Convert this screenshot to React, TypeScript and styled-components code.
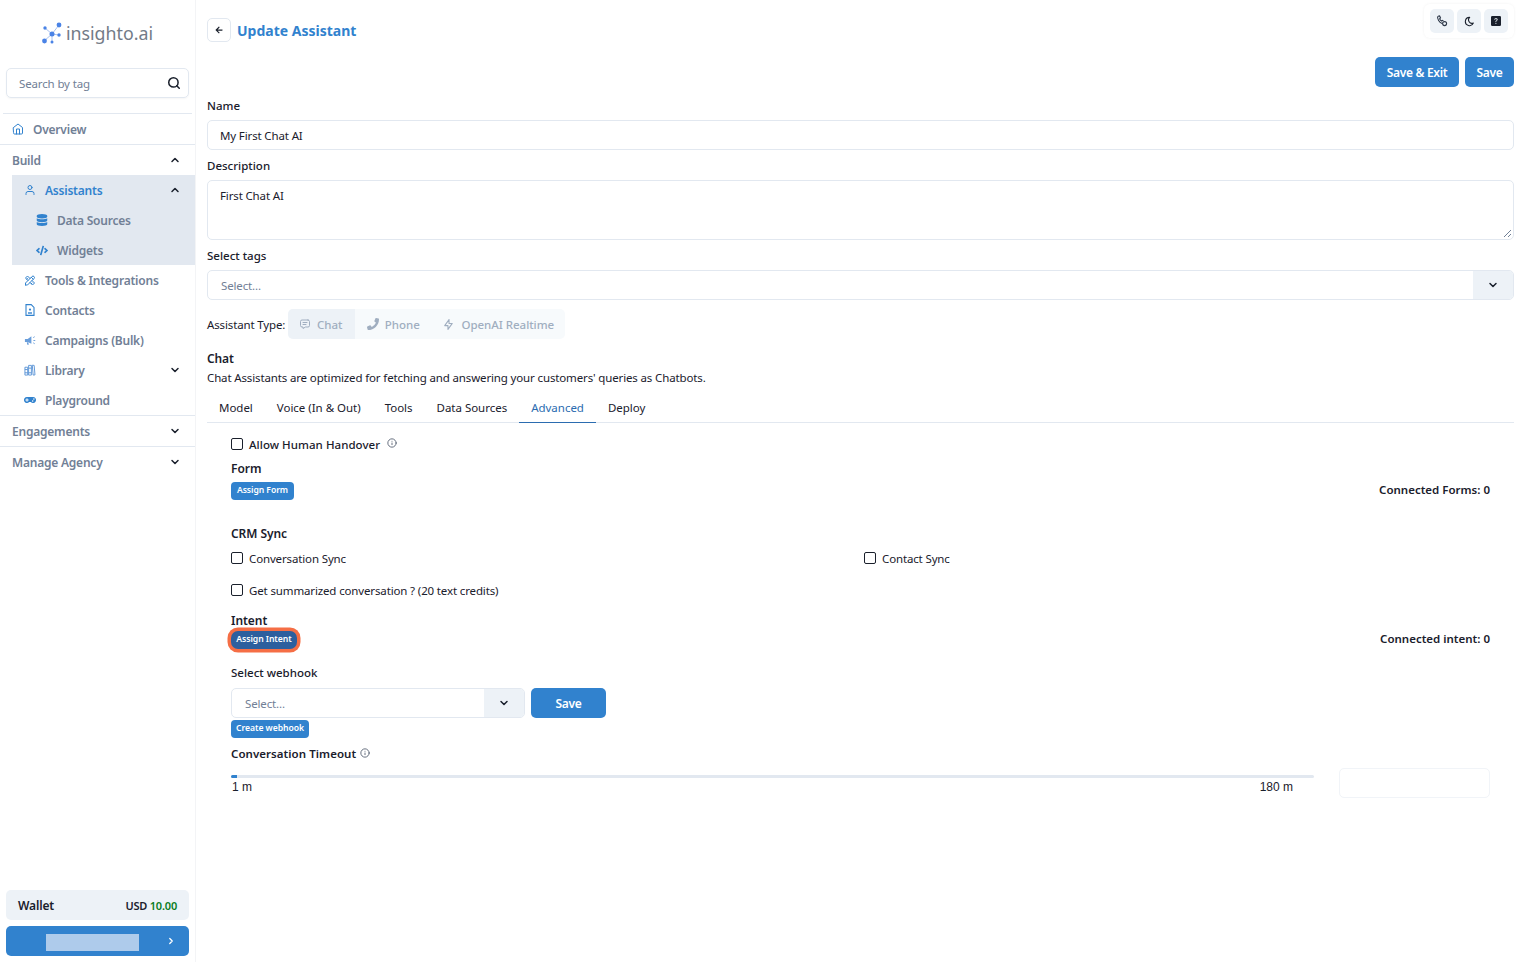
import React from "react";
import styled, { createGlobalStyle } from "styled-components";
import { FiSearch, FiChevronDown, FiChevronUp, FiChevronRight, FiHome, FiUser, FiInfo } from "react-icons/fi";
import { FaDatabase, FaCode, FaGamepad, FaPhoneAlt, FaArrowLeft } from "react-icons/fa";
import { TbTools, TbBolt, TbMessage, TbMoon } from "react-icons/tb";
import { BsFillQuestionSquareFill } from "react-icons/bs";

const Global = createGlobalStyle`
  html, body { margin: 0; padding: 0; background: #fff; }
  body { font-family: "Noto Sans", "Open Sans", sans-serif; font-size: 11.5px; letter-spacing: -0.14px; color: #1a202c; }
  * { box-sizing: border-box; }
`;

const Page = styled.div`
  display: flex;
  width: 1526px;
  height: 962px;
  overflow: hidden;
`;

const Sidebar = styled.aside`
  width: 196px;
  height: 962px;
  flex: none;
  display: flex;
  flex-direction: column;
  border-right: 1px solid #f3f4f6;
`;

const LogoRow = styled.div`
  height: 68px;
  display: flex;
  align-items: center;
  justify-content: center;
  gap: 4px;
  color: #737b87;
  font-size: 17.8px;
  letter-spacing: 0;
  padding: 0 0 2px 0;
`;

const SearchBox = styled.div`
  margin: 0 6px;
  height: 30px;
  border: 1px solid #e2e8f0;
  border-radius: 5px;
  display: flex;
  align-items: center;
  justify-content: space-between;
  padding: 0 7px 0 12px;
  color: #718096;
  box-shadow: 0 1px 2px rgba(0, 0, 0, 0.04);
  svg { color: #1a202c; stroke-width: 2.6; }
`;

const Divider = styled.div<{ $top?: number; $inset?: number }>`
  height: 1px;
  background: #e2e8f0;
  margin: ${(p) => p.$top ?? 0}px ${(p) => p.$inset ?? 0}px 0;
`;

const NavRow = styled.div<{ $indent: number; $active?: boolean }>`
  height: 30px;
  display: flex;
  align-items: center;
  padding-left: ${(p) => p.$indent}px;
  padding-right: 14px;
  font-weight: 600;
  font-size: 12px;
  letter-spacing: -0.22px;
  color: ${(p) => (p.$active ? "#3182ce" : "#718096")};
`;

const NavIcon = styled.span`
  width: 12px;
  margin-right: 9px;
  display: inline-flex;
  justify-content: center;
  color: #3182ce;
`;

const NavLabel = styled.span`
  flex: 1;
`;

const Chevron = styled.span`
  display: inline-flex;
  color: #1a202c;
  svg { stroke-width: 3; }
`;

const SubGroup = styled.div`
  margin-left: 12px;
  background: #e2e8f0;
`;

const Spacer = styled.div`
  flex: 1;
`;

const WalletCard = styled.div`
  margin: 0 6px;
  height: 30px;
  background: #edf2f7;
  border-radius: 5px;
  display: flex;
  align-items: center;
  justify-content: space-between;
  padding: 0 12px;
  font-weight: 600;
`;

const WalletName = styled.span`
  font-size: 12px;
`;

const WalletAmount = styled.span`
  font-size: 11px;
  letter-spacing: -0.2px;
  b { color: #0a7d1e; font-weight: 600; }
`;

const AccountButton = styled.div`
  margin: 6px;
  height: 30px;
  background: #3182ce;
  border-radius: 5px;
  display: flex;
  align-items: center;
  color: #fff;
  padding: 0 13px 0 40px;
  justify-content: space-between;
`;

const Redacted = styled.div`
  width: 93px;
  height: 17px;
  margin-top: 2px;
  background: #aecbeb;
`;

const Main = styled.main`
  flex: 1;
  min-width: 0;
  padding: 0 12px 0 11px;
`;

const TitleRow = styled.div`
  height: 57px;
  display: flex;
  align-items: flex-start;
  padding-top: 18px;
  gap: 6px;
`;

const BackButton = styled.div`
  width: 24px;
  height: 24px;
  border: 1px solid #e2e8f0;
  border-radius: 5px;
  display: flex;
  align-items: center;
  justify-content: center;
`;

const Title = styled.h1`
  margin: 0;
  font-size: 14px;
  line-height: 25px;
  letter-spacing: 0;
  font-weight: 700;
  color: #3182ce;
`;

const UtilityCard = styled.div`
  margin: -14px 0 0 auto;
  padding: 5px 6px;
  display: flex;
  gap: 3px;
  border-radius: 6px;
  box-shadow: 0 0 3px rgba(0, 0, 0, 0.06);
`;

const UtilityButton = styled.div`
  width: 24px;
  height: 24px;
  background: #edf2f7;
  border-radius: 5px;
  display: flex;
  align-items: center;
  justify-content: center;
`;

const ActionRow = styled.div`
  display: flex;
  justify-content: flex-end;
  gap: 6px;
`;

const SolidButton = styled.button<{ $w: number }>`
  width: ${(p) => p.$w}px;
  height: 30px;
  border: none;
  border-radius: 5px;
  background: #3182ce;
  color: #fff;
  font: 600 12px "Noto Sans", sans-serif;
  letter-spacing: -0.3px;
  padding: 0;
`;

const FieldLabel = styled.div<{ $top?: number; $gap?: number }>`
  height: 18px;
  line-height: 20px;
  font-weight: 500;
  letter-spacing: 0;
  margin: ${(p) => p.$top ?? 0}px 0 ${(p) => p.$gap ?? 6}px;
`;

const TextBox = styled.div<{ $h?: number }>`
  height: ${(p) => p.$h ?? 30}px;
  border: 1px solid #e2e8f0;
  border-radius: 5px;
  padding: 0 12px;
  line-height: 29px;
  position: relative;
`;

const Grip = styled.svg`
  position: absolute;
  right: 1px;
  bottom: 1px;
`;

const SelectBox = styled.div<{ $w?: number }>`
  height: 30px;
  ${(p) => (p.$w ? `width: ${p.$w}px;` : "")}
  border: 1px solid #e2e8f0;
  border-radius: 5px;
  display: flex;
  overflow: hidden;
  color: #718096;
`;

const SelectValue = styled.div`
  flex: 1;
  padding-left: 13px;
  line-height: 29px;
`;

const SelectAddon = styled.div`
  width: 40px;
  background: #edf2f7;
  display: flex;
  align-items: center;
  justify-content: center;
  color: #1a202c;
  svg { stroke-width: 3; }
`;

const TypeRow = styled.div`
  height: 30px;
  margin-top: 9px;
  display: flex;
  align-items: center;
  gap: 3px;
`;

const TypeGroup = styled.div`
  display: flex;
  height: 30px;
  background: #f7fafc;
  border-radius: 5px;
  overflow: hidden;
`;

const TypeTab = styled.div<{ $on?: boolean; $w: number }>`
  width: ${(p) => p.$w}px;
  display: flex;
  align-items: center;
  justify-content: center;
  gap: 6px;
  color: #a0aec0;
  font-weight: 500;
  letter-spacing: -0.03px;
  padding-right: 2px;
  background: ${(p) => (p.$on ? "#edf2f7" : "transparent")};
`;

const Mirrored = styled.span`
  display: inline-flex;
  transform: scaleX(-1);
`;

const SectionName = styled.div`
  margin-top: 11px;
  line-height: 18px;
  font-size: 12px;
  font-weight: 600;
`;

const SectionText = styled.div`
  line-height: 20px;
`;

const Tabs = styled.div`
  display: flex;
  height: 30px;
  margin-top: 5px;
  border-bottom: 1px solid #e2e8f0;
`;

const Tab = styled.div<{ $on?: boolean }>`
  padding: 0 12px;
  line-height: 29px;
  height: 30px;
  letter-spacing: -0.02px;
  color: ${(p) => (p.$on ? "#2b6cb0" : "#1a202c")};
  border-bottom: 1px solid ${(p) => (p.$on ? "#2b6cb0" : "transparent")};
`;

const Panel = styled.div`
  padding: 11px 24px 0;
`;

const CheckLine = styled.label<{ $top?: number; $grow?: boolean; $medium?: boolean }>`
  display: flex;
  align-items: center;
  height: 20px;
  gap: 6px;
  margin-top: ${(p) => p.$top ?? 0}px;
  ${(p) => (p.$grow ? "flex: 0 0 633px;" : "")}
  ${(p) => (p.$medium ? "font-weight: 500; letter-spacing: 0.05px;" : "")}
`;

const Box = styled.span`
  width: 12px;
  height: 12px;
  border: 1px solid #1a202c;
  border-radius: 2px;
  flex: none;
`;

const InfoMark = styled.span`
  display: inline-flex;
  color: #4a5568;
  margin: -3px 0 0 1px;
`;

const Heading = styled.div<{ $top?: number }>`
  font-weight: 600;
  font-size: 12px;
  letter-spacing: -0.05px;
  line-height: 18px;
  margin-top: ${(p) => p.$top ?? 0}px;
`;

const TimeoutHeading = styled(Heading)`
  font-size: 11.5px;
  letter-spacing: 0.05px;
`;

const SpreadRow = styled.div<{ $top?: number }>`
  display: flex;
  justify-content: space-between;
  align-items: center;
  margin-top: ${(p) => p.$top ?? 0}px;
`;

const SyncRow = styled.div`
  display: flex;
  margin-top: 5px;
`;

const Connected = styled.div`
  font-weight: 600;
  letter-spacing: 0;
  line-height: 14px;
  padding-bottom: 3px;
`;

const Pill = styled.span<{ $ring?: boolean; $w: number }>`
  display: inline-block;
  width: ${(p) => p.$w}px;
  height: 18px;
  line-height: 17px;
  text-align: center;
  border-radius: 4px;
  font-size: 8.6px;
  letter-spacing: -0.05px;
  font-weight: 600;
  color: #fff;
  background: ${(p) => (p.$ring ? "#2c5f9e" : "#3182ce")};
  ${(p) => (p.$ring ? "box-shadow: 0 0 0 3.5px #f56e45; border-radius: 7px;" : "")}
`;

const BlockPill = styled(Pill)`
  display: block;
  margin-top: 2px;
`;

const WebhookRow = styled.div`
  display: flex;
  gap: 6px;
`;

const SliderRow = styled.div`
  display: flex;
  margin-top: 5px;
  gap: 25px;
  align-items: flex-start;
`;

const SliderCol = styled.div`
  flex: 1;
  padding-top: 7px;
`;

const Track = styled.div`
  height: 3px;
  background: #e2e8f0;
  border-radius: 2px;
  overflow: hidden;
`;

const TrackFill = styled.div`
  height: 3px;
  background: #3182ce;
`;

const SliderScale = styled.div`
  display: flex;
  justify-content: space-between;
  padding: 0 21px 0 1px;
  line-height: 18px;
  font-family: "Liberation Sans", sans-serif;
  font-size: 12px;
  letter-spacing: 0;
`;

const GhostInput = styled.div`
  width: 151px;
  height: 30px;
  border: 1px solid #f1f4f8;
  border-radius: 5px;
`;

const LogoMark = () => (
  <svg width="20" height="22" viewBox="0 0 20 22" fill="#4a83e6" aria-hidden>
    <g stroke="#a9c2f0" strokeWidth="1">
      <path d="M3 6l7 6M17 3l-7 9M2 19l8-7M10 12l7 1M10 12l0 7" />
    </g>
    <circle cx="3" cy="6" r="1.7" />
    <circle cx="17" cy="3" r="2.4" />
    <circle cx="10" cy="12" r="2.5" />
    <circle cx="2.5" cy="19" r="2.4" />
    <circle cx="17" cy="13" r="1.7" />
    <circle cx="10" cy="20" r="1.5" />
  </svg>
);

const ContactsIcon = () => (
  <svg width="10" height="12" viewBox="0 0 10 12" fill="none" stroke="#3182ce" strokeWidth="1.1" aria-hidden>
    <path d="M1 .6h5.2L9 3.4v8H1z" />
    <circle cx="5" cy="5.6" r="1.1" fill="#3182ce" stroke="none" />
    <path d="M3 9h4" strokeWidth="1.4" />
  </svg>
);

const CampaignIcon = () => (
  <svg width="13" height="11" viewBox="0 0 13 11" fill="#6a9edb" aria-hidden>
    <path d="M1 4h3l4-3v8L4 7H1z" />
    <path d="M3 7.5h1.6l.6 2.5H3.6z" />
    <path d="M10 2.4l1.6-1M10.2 5.5h2M10 8l1.6 1" stroke="#6a9edb" strokeWidth="1" fill="none" />
  </svg>
);

const LibraryIcon = () => (
  <svg width="13" height="12" viewBox="0 0 13 12" fill="none" stroke="#5a94d6" strokeWidth="1" aria-hidden>
    <path d="M1 3h3v8.5H1zM5 1h3v10.5H5zM9 .8l2 .2.9 10.3-2 .2z" />
    <path d="M1 5.5h3M5 4h3M1 9h3M5 9h3" />
  </svg>
);

const PhoneGearIcon = () => (
  <svg width="12" height="12" viewBox="0 0 12 12" fill="none" stroke="#2d3748" strokeWidth="1.1" aria-hidden>
    <path d="M2 1.2l1.6-.3.9 2-.9.9c.4 1 1 1.7 2 2.2l.9-.7 1 .6" />
    <path d="M1.6 1.4c-.4 2.6 1.6 6 4.4 7" />
    <circle cx="8.6" cy="8.6" r="2" />
  </svg>
);

const Info = () => (
  <InfoMark>
    <FiInfo size={10} />
  </InfoMark>
);

export default function App() {
  return (
    <>
      <Global />
      <Page>
        <Sidebar>
          <LogoRow>
            <LogoMark />
            <span>insighto.ai</span>
          </LogoRow>
          <SearchBox>
            Search by tag
            <FiSearch size={14} />
          </SearchBox>
          <Divider $top={15} $inset={3} />
          <NavRow $indent={12}>
            <NavIcon>
              <FiHome size={12} />
            </NavIcon>
            <NavLabel>Overview</NavLabel>
          </NavRow>
          <Divider />
          <NavRow $indent={12}>
            <NavLabel>Build</NavLabel>
            <Chevron>
              <FiChevronUp size={12} />
            </Chevron>
          </NavRow>
          <SubGroup>
            <NavRow $indent={12} $active>
              <NavIcon>
                <FiUser size={12} />
              </NavIcon>
              <NavLabel>Assistants</NavLabel>
              <Chevron>
                <FiChevronUp size={12} />
              </Chevron>
            </NavRow>
            <NavRow $indent={24}>
              <NavIcon>
                <FaDatabase size={12} />
              </NavIcon>
              <NavLabel>Data Sources</NavLabel>
            </NavRow>
            <NavRow $indent={24}>
              <NavIcon>
                <FaCode size={13} />
              </NavIcon>
              <NavLabel>Widgets</NavLabel>
            </NavRow>
          </SubGroup>
          <NavRow $indent={24}>
            <NavIcon>
              <TbTools size={13} />
            </NavIcon>
            <NavLabel>Tools &amp; Integrations</NavLabel>
          </NavRow>
          <NavRow $indent={24}>
            <NavIcon>
              <ContactsIcon />
            </NavIcon>
            <NavLabel>Contacts</NavLabel>
          </NavRow>
          <NavRow $indent={24}>
            <NavIcon>
              <CampaignIcon />
            </NavIcon>
            <NavLabel>Campaigns (Bulk)</NavLabel>
          </NavRow>
          <NavRow $indent={24}>
            <NavIcon>
              <LibraryIcon />
            </NavIcon>
            <NavLabel>Library</NavLabel>
            <Chevron>
              <FiChevronDown size={12} />
            </Chevron>
          </NavRow>
          <NavRow $indent={24}>
            <NavIcon>
              <FaGamepad size={14} />
            </NavIcon>
            <NavLabel>Playground</NavLabel>
          </NavRow>
          <Divider />
          <NavRow $indent={12}>
            <NavLabel>Engagements</NavLabel>
            <Chevron>
              <FiChevronDown size={12} />
            </Chevron>
          </NavRow>
          <Divider />
          <NavRow $indent={12}>
            <NavLabel>Manage Agency</NavLabel>
            <Chevron>
              <FiChevronDown size={12} />
            </Chevron>
          </NavRow>
          <Spacer />
          <WalletCard>
            <WalletName>Wallet</WalletName>
            <WalletAmount>
              USD <b>10.00</b>
            </WalletAmount>
          </WalletCard>
          <AccountButton>
            <Redacted />
            <FiChevronRight size={10} strokeWidth={3} />
          </AccountButton>
        </Sidebar>
        <Main>
          <TitleRow>
            <BackButton>
              <FaArrowLeft size={8} />
            </BackButton>
            <Title>Update Assistant</Title>
            <UtilityCard>
              <UtilityButton>
                <PhoneGearIcon />
              </UtilityButton>
              <UtilityButton>
                <TbMoon size={11} strokeWidth={2.4} />
              </UtilityButton>
              <UtilityButton>
                <BsFillQuestionSquareFill size={10} />
              </UtilityButton>
            </UtilityCard>
          </TitleRow>
          <ActionRow>
            <SolidButton $w={84}>Save &amp; Exit</SolidButton>
            <SolidButton $w={49}>Save</SolidButton>
          </ActionRow>
          <FieldLabel $top={9}>Name</FieldLabel>
          <TextBox>My First Chat AI</TextBox>
          <FieldLabel $top={6}>Description</FieldLabel>
          <TextBox $h={60}>
            First Chat AI
            <Grip width="9" height="9" viewBox="0 0 9 9">
              <path d="M1 8L8 1M5 8L8 5" stroke="#718096" strokeWidth="1" />
            </Grip>
          </TextBox>
          <FieldLabel $top={6}>Select tags</FieldLabel>
          <SelectBox>
            <SelectValue>Select...</SelectValue>
            <SelectAddon>
              <FiChevronDown size={12} />
            </SelectAddon>
          </SelectBox>
          <TypeRow>
            Assistant Type:
            <TypeGroup>
              <TypeTab $on $w={67}>
                <TbMessage size={12} />
                Chat
              </TypeTab>
              <TypeTab $w={78}>
                <Mirrored>
                  <FaPhoneAlt size={12} />
                </Mirrored>
                Phone
              </TypeTab>
              <TypeTab $w={132}>
                <TbBolt size={13} />
                OpenAI Realtime
              </TypeTab>
            </TypeGroup>
          </TypeRow>
          <SectionName>Chat</SectionName>
          <SectionText>Chat Assistants are optimized for fetching and answering your customers' queries as Chatbots.</SectionText>
          <Tabs>
            <Tab>Model</Tab>
            <Tab>Voice (In &amp; Out)</Tab>
            <Tab>Tools</Tab>
            <Tab>Data Sources</Tab>
            <Tab $on>Advanced</Tab>
            <Tab>Deploy</Tab>
          </Tabs>
          <Panel>
            <CheckLine $medium>
              <Box />
              Allow Human Handover
              <Info />
            </CheckLine>
            <Heading $top={6}>Form</Heading>
            <SpreadRow $top={4}>
              <Pill $w={63}>Assign Form</Pill>
              <Connected>Connected Forms: 0</Connected>
            </SpreadRow>
            <Heading $top={25}>CRM Sync</Heading>
            <SyncRow>
              <CheckLine $grow>
                <Box />
                Conversation Sync
              </CheckLine>
              <CheckLine>
                <Box />
                Contact Sync
              </CheckLine>
            </SyncRow>
            <CheckLine $top={12}>
              <Box />
              Get summarized conversation ? (20 text credits)
            </CheckLine>
            <Heading $top={12}>Intent</Heading>
            <SpreadRow $top={1}>
              <Pill $ring $w={66}>
                Assign Intent
              </Pill>
              <Connected>Connected intent: 0</Connected>
            </SpreadRow>
            <FieldLabel $top={14} $gap={7}>
              Select webhook
            </FieldLabel>
            <WebhookRow>
              <SelectBox $w={294}>
                <SelectValue>Select...</SelectValue>
                <SelectAddon>
                  <FiChevronDown size={12} />
                </SelectAddon>
              </SelectBox>
              <SolidButton $w={75}>Save</SolidButton>
            </WebhookRow>
            <BlockPill $w={78}>Create webhook</BlockPill>
            <TimeoutHeading $top={7}>
              Conversation Timeout <Info />
            </TimeoutHeading>
            <SliderRow>
              <SliderCol>
                <Track>
                  <TrackFill style={{ width: `${(6 / 1083) * 100}%` }} />
                </Track>
                <SliderScale>
                  <span>1 m</span>
                  <span>180 m</span>
                </SliderScale>
              </SliderCol>
              <GhostInput />
            </SliderRow>
          </Panel>
        </Main>
      </Page>
    </>
  );
}
